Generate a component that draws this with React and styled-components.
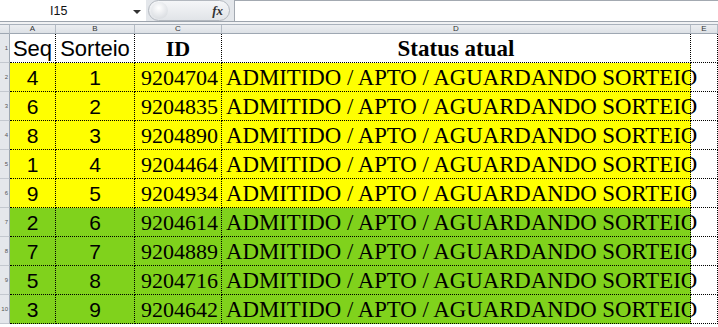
import React from "react";
import styled, { createGlobalStyle } from "styled-components";

const Global = createGlobalStyle`
  html, body {
    margin: 0;
    padding: 0;
    background: #ffffff;
    overflow: hidden;
  }
  * { box-sizing: border-box; }
`;

const rows = [
  [4, 1, "9204704", "y"],
  [6, 2, "9204835", "y"],
  [8, 3, "9204890", "y"],
  [1, 4, "9204464", "y"],
  [9, 5, "9204934", "y"],
  [2, 6, "9204614", "g"],
  [7, 7, "9204889", "g"],
  [5, 8, "9204716", "g"],
  [3, 9, "9204642", "g"],
];

const status = "ADMITIDO / APTO / AGUARDANDO SORTEIO";

const Page = styled.div`
  width: 718px;
  height: 327px;
  display: flex;
  flex-direction: column;
  overflow: hidden;
  font-family: "Liberation Sans", Arial, sans-serif;
`;

const TopBar = styled.div`
  height: 22px;
  display: flex;
  align-items: stretch;
  background: #e4e7eb;
  border-bottom: 1px solid #9da4ad;
`;

const NameBox = styled.div`
  width: 146px;
  background: #fff;
  display: flex;
  align-items: center;
  position: relative;
  padding-left: 50px;
  font-size: 12.5px;
  color: #111;
`;

const DropArrow = styled.span`
  position: absolute;
  left: 133px;
  top: 10px;
  width: 0;
  height: 0;
  border-left: 4px solid transparent;
  border-right: 4px solid transparent;
  border-top: 4px solid #333;
`;

const FxPill = styled.div`
  width: 82px;
  margin: 0 0 0 2px;
  border: 1px solid #b3b8bf;
  border-radius: 11px;
  background: linear-gradient(#f5f6f8, #e1e4e8);
  display: flex;
  align-items: center;
  justify-content: space-between;
  padding: 0 6px 0 2px;
`;

const Knob = styled.span`
  width: 17px;
  height: 17px;
  border-radius: 50%;
  background: radial-gradient(circle at 45% 35%, #ffffff 0, #e9ebee 45%, #cfd3d8 100%);
`;

const Fx = styled.span`
  font-family: "Liberation Serif", serif;
  font-style: italic;
  font-weight: bold;
  font-size: 13px;
  color: #333;
`;

const FormulaInput = styled.div`
  flex: 1;
  margin-left: 4px;
  background: #fff;
  border-top: 1px solid #a3a9b1;
  border-left: 1px solid #a3a9b1;
`;

const Gap = styled.div`
  height: 3px;
  background: #f1f2f4;
  border-bottom: 1px solid #aab2bc;
`;

const Sheet = styled.div`
  display: grid;
  grid-template-columns: 10px 46px 79px 87px 469px 1fr;
  grid-template-rows: 9px 29px repeat(9, 29px);
  background: #fff;
`;

const ColHead = styled.div`
  background: linear-gradient(#eceef1, #dde1e6);
  border-right: 1px solid #b4bbc4;
  border-bottom: 1px solid #9ea7b2;
  font-size: 8px;
  line-height: 8px;
  color: #333;
  text-align: center;
  overflow: hidden;
`;

const RowHead = styled.div`
  background: #e4e7eb;
  border-right: 1px solid #9ea7b2;
  border-bottom: 1px solid #c3c8cf;
  display: flex;
  align-items: center;
  justify-content: flex-end;
  padding-right: 1px;
  font-size: 6px;
  color: #555;
`;

const bgs = { y: "#ffff00", g: "#80d21c", w: "transparent" };

const Cell = styled.div`
  background: ${(p) => bgs[p.$bg || "w"]};
  border-right: 1px dotted #000;
  border-bottom: 1px dotted #000;
  display: flex;
  align-items: center;
  justify-content: ${(p) => p.$align || "center"};
  padding: 0 ${(p) => (p.$align === "flex-end" ? "3px" : "0")} 0
    ${(p) => (p.$align === "flex-start" ? "4px" : "0")};
  font-family: ${(p) =>
    p.$serif ? '"Liberation Serif", "Times New Roman", serif' : '"Liberation Sans", Arial, sans-serif'};
  font-weight: ${(p) => (p.$bold ? "bold" : "normal")};
  font-size: ${(p) => p.$size || 21}px;
  line-height: 29px;
  color: #000;
  white-space: nowrap;
  min-width: 0;
  overflow: visible;
`;

export default function App() {
  return (
    <Page>
      <Global />
      <TopBar>
        <NameBox>
          I15
          <DropArrow />
        </NameBox>
        <FxPill>
          <Knob />
          <Fx>fx</Fx>
        </FxPill>
        <FormulaInput />
      </TopBar>
      <Gap />
      <Sheet>
        <ColHead />
        <ColHead>A</ColHead>
        <ColHead>B</ColHead>
        <ColHead>C</ColHead>
        <ColHead>D</ColHead>
        <ColHead>E</ColHead>

        <RowHead>1</RowHead>
        <Cell $size={22}>Seq</Cell>
        <Cell $size={22}>Sorteio</Cell>
        <Cell $serif $bold $size={22}>
          ID
        </Cell>
        <Cell $serif $bold $size={23}>
          Status atual
        </Cell>
        <Cell />

        {rows.map(([seq, sort, id, c], i) => (
          <React.Fragment key={id}>
            <RowHead>{i + 2}</RowHead>
            <Cell $bg={c}>{seq}</Cell>
            <Cell $bg={c}>{sort}</Cell>
            <Cell $bg={c} $serif $size={22} $align="flex-end">
              {id}
            </Cell>
            <Cell $bg={c} $serif $size={22.8} $align="flex-start">
              {status}
            </Cell>
            <Cell />
          </React.Fragment>
        ))}
      </Sheet>
    </Page>
  );
}
